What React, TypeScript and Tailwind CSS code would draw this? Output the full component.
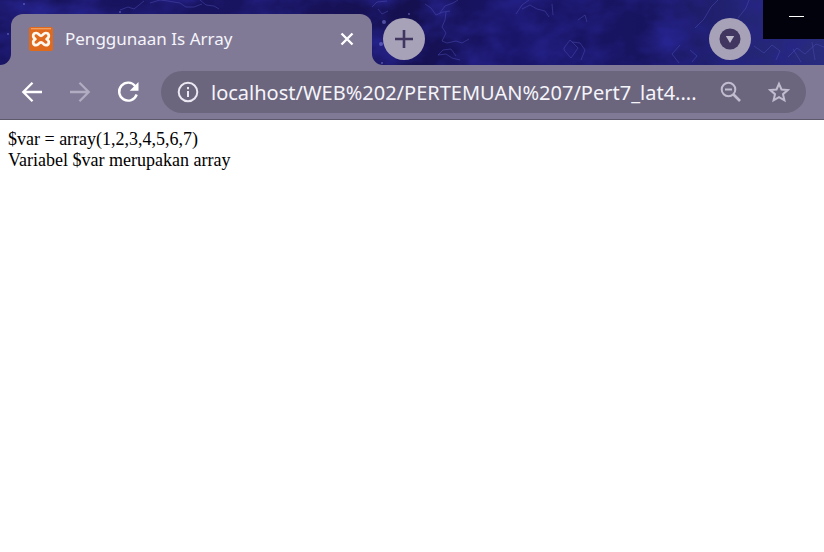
import React from "react";

function Backdrop() {
  return (
    <svg
      aria-hidden="true"
      className="absolute inset-0 h-full w-full"
      viewBox="0 0 824 65"
      preserveAspectRatio="xMidYMin slice"
    >
      <defs>
        <linearGradient id="night" x1="0" x2="1" y1="0" y2="0">
          <stop offset="0" stopColor="#17135c" />
          <stop offset="0.3" stopColor="#191460" />
          <stop offset="0.5" stopColor="#15104f" />
          <stop offset="0.62" stopColor="#191569" />
          <stop offset="0.78" stopColor="#17145f" />
          <stop offset="0.9" stopColor="#232474" />
          <stop offset="1" stopColor="#292c7c" />
        </linearGradient>
        <filter id="cloud" x="0" y="0" width="100%" height="100%" colorInterpolationFilters="sRGB">
          <feTurbulence type="fractalNoise" baseFrequency="0.02 0.03" numOctaves="4" seed="8" />
          <feColorMatrix values="0 0 0 0 0.15  0 0 0 0 0.14  0 0 0 0 0.56  2 0 0 0 -0.7" />
        </filter>
      </defs>
      <rect width="824" height="65" fill="url(#night)" />
      <rect width="824" height="65" filter="url(#cloud)" />
      <g fill="none" stroke="#4a4bb4" strokeLinejoin="round" strokeOpacity="0.5">
        <path d="M120 10l8-3 6 2 10-8M150 3l10-3 8 1 12 2 6 4 8 0 8-3M200 0l6 5 8 1 5 3" />
        <path d="M372 7l5-5 10-1M378 9l4 5 6-3M425 4l6 4 5 7 7-3 7-1" />
        <path d="M440 13l5-7 8-3 5-3M446 12l-1 8-3 7 4 6-4 8 5 2 9-2 6 2 7-4" />
        <path d="M438 55l5-5 8-1 5 7M438 55l8-1 6 4 8 2" />
        <path d="M516 14l6-9 7-5M522 9l8-4 7 4 8 2 4 6M552 4l1 11" />
        <path d="M578 20l7-5 2 7M564 48l6-8 8 8-7 10-7-8zM572 42l8 1 5 7-4 10" />
        <path d="M695 28l9-9 7-12 7-7M738 18l8-10 3-8M680 45l-8 9 7 9M690 50l7 6-5 6" />
        <path d="M754 46l10 7 8-8 8 6-4 9M788 57l9-9 8 6 11-10 8 3M793 49l8 13M812 42l3 18" />
      </g>
      <g fill="#7779d4" fillOpacity="0.6">
        <circle cx="8" cy="34" r="1" />
        <circle cx="24" cy="4" r="1" />
        <circle cx="384" cy="22" r="2" />
        <circle cx="409" cy="14" r="1" />
        <circle cx="381" cy="44" r="2" />
        <circle cx="382" cy="63" r="1" />
        <circle cx="120" cy="12" r="1" />
      </g>
    </svg>
  );
}

function XamppIcon() {
  return (
    <svg aria-hidden="true" className="size-6 shrink-0" viewBox="0 0 24 24">
      <rect width="24" height="24" rx="2" fill="#df6a1e" />
      <path d="M2 1.700h20" stroke="#f3a468" strokeWidth="1.200" />
      <path
        d="M7.300 6C9.800 6 9.800 8.800 12 8.800S14.200 6 16.700 6C20.300 6 21 10 17.600 12.200c3.400 2 2.700 6-.9 6-2.500 0-2.500-2.800-4.700-2.800s-2.200 2.800-4.700 2.800c-3.600 0-4.300-4-.9-6C3 10 3.700 6 7.300 6z"
        fill="none"
        stroke="#fff8ef"
        strokeWidth="2.700"
        strokeLinejoin="round"
      />
    </svg>
  );
}

function Flare({ right = false }: { right?: boolean }) {
  return (
    <svg aria-hidden="true" className="size-[11px] shrink-0" viewBox="0 0 11 11">
      <path d={right ? "M0 0a11 11 0 0 0 11 11H0z" : "M11 0A11 11 0 0 1 0 11h11z"} fill="#807a96" />
    </svg>
  );
}

function TabStrip() {
  return (
    <header className="relative h-[65px] overflow-hidden bg-[#18145f]">
      <Backdrop />
      <div className="relative flex h-full items-end">
        <Flare />
        <div className="flex h-[51px] w-[361px] items-center rounded-t-xl bg-[#807a96] pr-4 pb-px pl-[18px]">
          <XamppIcon />
          <span className="ml-3 flex-1 truncate text-[17px] leading-6 text-[#f6f4fb]">Penggunaan Is Array</span>
          <button type="button" aria-label="Close tab" className="flex size-[18px] items-center justify-center">
            <svg className="size-[18px]" viewBox="0 0 18 18" fill="none" stroke="#fff" strokeWidth="2.400">
              <path d="M3.500 3.500l11 11M14.500 3.500l-11 11" />
            </svg>
          </button>
        </div>
        <Flare right />
        <button
          type="button"
          aria-label="New tab"
          className="mb-[5px] flex size-[42px] items-center justify-center rounded-full bg-[#a7a2b8]"
        >
          <svg className="size-5" viewBox="0 0 20 20" fill="none" stroke="#40365f" strokeWidth="2.600">
            <path d="M10 1v18M1 10h18" />
          </svg>
        </button>
        <div className="flex-1" />
        <button
          type="button"
          aria-label="Search tabs"
          className="mr-3 mb-[5px] flex size-[42px] items-center justify-center rounded-full bg-[#a7a2b8]"
        >
          <svg className="size-[22px]" viewBox="0 0 22 22">
            <circle cx="11" cy="11" r="10.500" fill="#40365f" />
            <path d="M6.800 8h8.400L11 15z" fill="#bdb8cc" />
          </svg>
        </button>
        <button
          type="button"
          aria-label="Minimize"
          className="flex h-[39px] w-[61px] justify-center self-start bg-[#02020d] pt-4 pl-[6px]"
        >
          <span className="h-px w-[15px] bg-white" />
        </button>
      </div>
    </header>
  );
}

function Toolbar() {
  return (
    <nav className="flex h-[55px] items-center border-b border-[#5d586b] bg-[#807a96] pr-[18px] pl-5">
      <button type="button" aria-label="Back" className="size-6">
        <svg className="size-6" viewBox="0 0 24 24" fill="none" stroke="#fff" strokeWidth="2.300">
          <path d="M22 12H3.500M12.500 2.800L3.300 12l9.200 9.200" />
        </svg>
      </button>
      <button type="button" aria-label="Forward" disabled className="ml-6 size-6">
        <svg className="size-6" viewBox="0 0 24 24" fill="none" stroke="#b1acc1" strokeWidth="2.300">
          <path d="M2 12h18.500M11.500 2.800l9.200 9.200-9.200 9.200" />
        </svg>
      </button>
      <button type="button" aria-label="Reload" className="ml-6 size-6">
        <svg className="size-6" viewBox="0 0 24 24">
          <path d="M19.400 6.200A9 9 0 1 0 20.700 14.500" fill="none" stroke="#fff" strokeWidth="2.400" />
          <path d="M22.500 2v8.800h-8.800z" fill="#fff" />
        </svg>
      </button>
      <form
        className="ml-[21px] flex h-[42px] min-w-0 flex-1 items-center rounded-full bg-[#6b667e] px-4"
        onSubmit={(event) => event.preventDefault()}
      >
        <button type="button" aria-label="Site information" className="size-[22px] shrink-0">
          <svg className="size-[22px]" viewBox="0 0 22 22" fill="none" stroke="#ebe8f3" strokeWidth="2">
            <circle cx="11" cy="11" r="9.300" />
            <path d="M11 10v6M11 6v2.200" />
          </svg>
        </button>
        <input
          type="text"
          aria-label="Address"
          defaultValue="localhost/WEB%202/PERTEMUAN%207/Pert7_lat4...."
          className="ml-3 h-7 min-w-0 flex-1 bg-transparent pt-0.5 text-xl leading-7 text-[#f6f4fb] outline-none"
        />
        <button type="button" aria-label="Zoom out" className="ml-2 size-[22px] shrink-0">
          <svg className="size-[22px]" viewBox="0 0 22 22" fill="none" stroke="#c1bdcf" strokeWidth="2">
            <circle cx="8.500" cy="8.500" r="6.800" />
            <path d="M5 8.500h7" />
            <path d="M13.500 13.500l6.500 6.500" strokeWidth="2.600" />
          </svg>
        </button>
        <button type="button" aria-label="Bookmark this page" className="ml-[26px] size-[22px] shrink-0">
          <svg className="size-[22px]" viewBox="0 0 22 22" fill="none" stroke="#c1bdcf" strokeWidth="2">
            <path d="M11 2.800l2.500 5.700 6.200.6-4.700 4.100 1.400 6.100L11 16.100l-5.400 3.200L7 13.200 2.300 9.100l6.200-.6z" />
          </svg>
        </button>
      </form>
    </nav>
  );
}

export default function App() {
  return (
    <div className="min-h-screen bg-white font-['Noto_Sans','Open_Sans',sans-serif]">
      <TabStrip />
      <Toolbar />
      <main className="px-2 py-[9px] font-['Liberation_Serif','Times_New_Roman',serif] text-lg leading-[21px] text-black">
        <p>$var = array(1,2,3,4,5,6,7)</p>
        <p>Variabel $var merupakan array</p>
      </main>
    </div>
  );
}
